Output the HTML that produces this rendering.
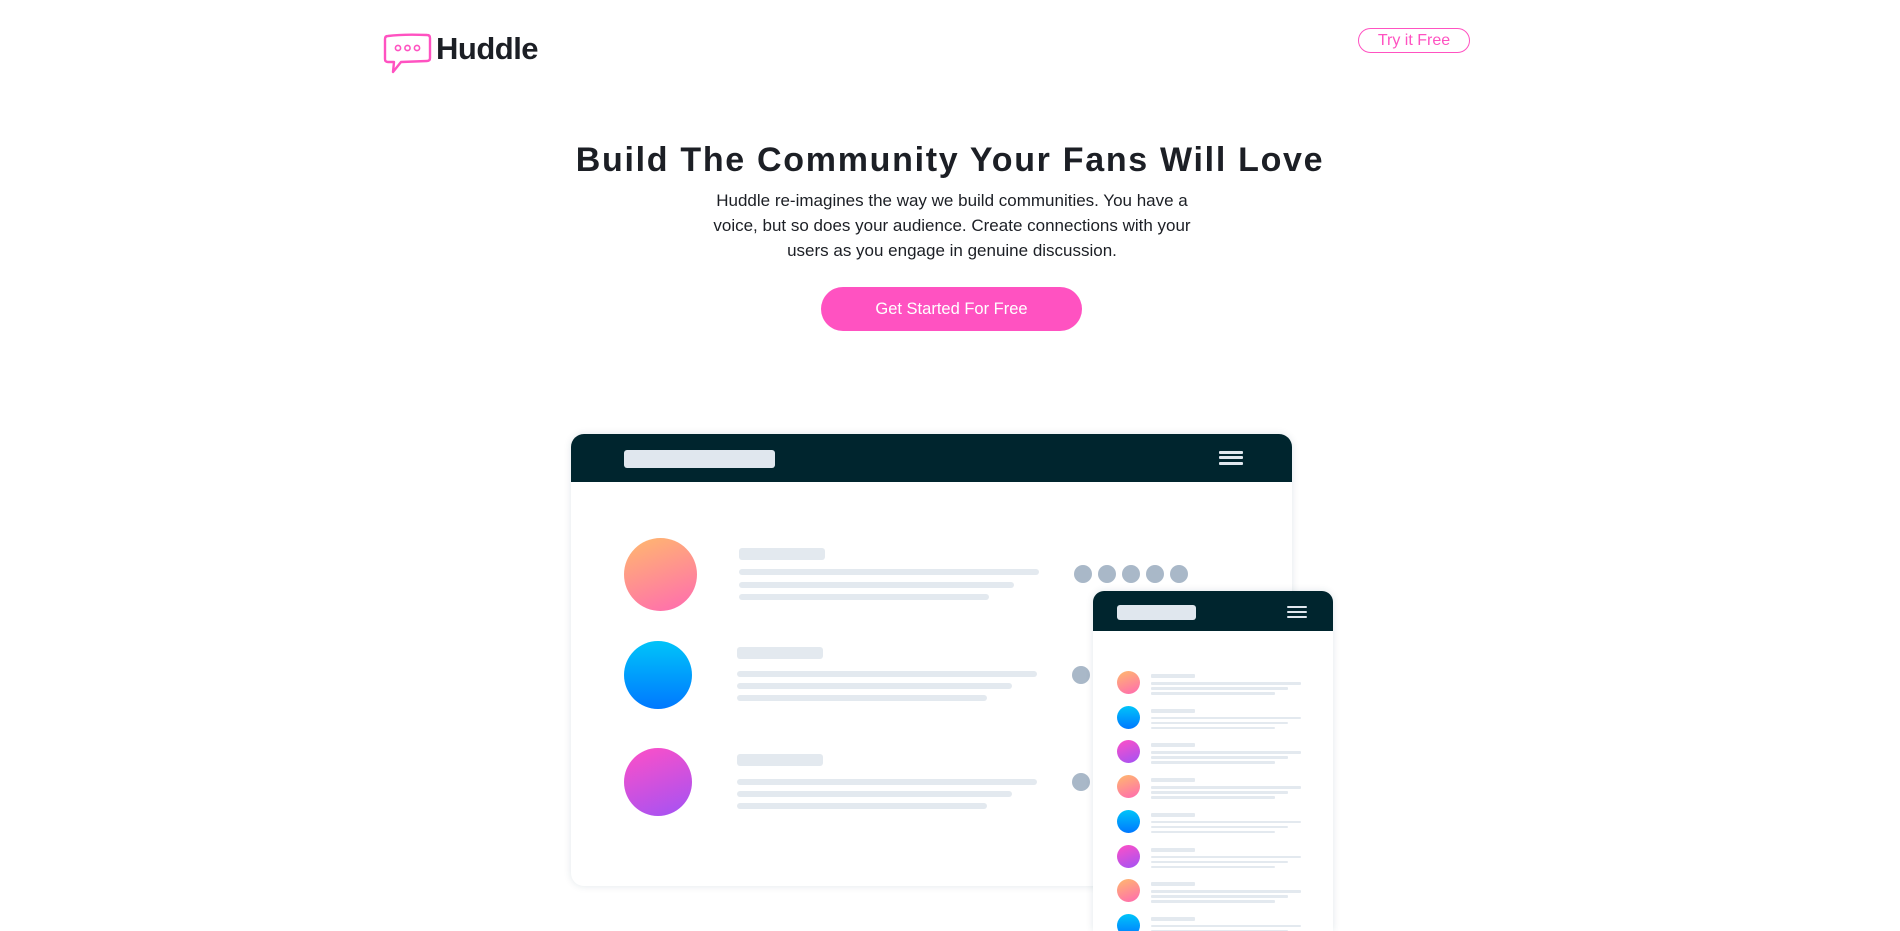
<!DOCTYPE html>
<html><head><meta charset="utf-8"><style>
*{margin:0;padding:0;box-sizing:border-box}
body{width:1900px;height:922px;overflow:hidden;background:#fff;font-family:"Liberation Sans",sans-serif;color:#1a1a1a;position:relative}
.abs{position:absolute}
.logo{left:436px;top:31px;font-size:31px;font-weight:bold;color:#1c1f25;letter-spacing:-0.5px}
.try{left:1358px;top:28px;width:112px;height:25px;border:1px solid #ff52c1;border-radius:13px;color:#ff52c1;font-size:16px;text-align:center;line-height:23px}
h1{position:absolute;left:0;width:1900px;top:141px;text-align:center;font-size:34px;letter-spacing:1.7px;color:#1c1f25;font-weight:bold}
p.d{position:absolute;left:700px;width:504px;top:188px;text-align:center;font-size:17px;line-height:25px;color:#1c1f25}
.btn{left:821px;top:287px;width:261px;height:44px;border-radius:22px;background:#ff52c1;color:#fff;font-size:16.5px;text-align:center;line-height:44px}
.big{left:571px;top:434px;width:721px;height:452px;border-radius:13px;background:#fff;box-shadow:0 0 8px rgba(0,60,80,.12);overflow:hidden}
.hdr{background:#00252e}
.bar{background:#e0e7ee;border-radius:3px}
.g{background:#e3e9ef;border-radius:3px}
.dot{width:18px;height:18px;border-radius:50%;background:#a9b8c8}
.c1{background:linear-gradient(160deg,#ffb96d,#ff6ab1)}
.c2{background:linear-gradient(180deg,#00c4f9,#0078ff)}
.c3{background:linear-gradient(160deg,#ff50c6,#a252f5)}
.circ{border-radius:50%}
.ham{height:3px;background:#e0e7ee;border-radius:1px}
.phone{left:1093px;top:591px;width:240px;height:340px;border-radius:11px 11px 0 0;background:#fff;box-shadow:0 0 8px rgba(0,60,80,.12);overflow:hidden}
</style></head><body>
<svg class="abs" style="left:383px;top:32px" width="50" height="42" viewBox="0 0 50 42">
<path d="M5 4 Q20 2 44 3 Q47 3 47 6 L47 26 Q47 29 44 29 L18 30 L10 40 L11 30 L5 30 Q2 30 2 27 L2 7 Q2 4 5 4Z" fill="none" stroke="#ff52c1" stroke-width="2.4" stroke-linejoin="round"/>
<circle cx="15" cy="16" r="2.6" fill="none" stroke="#ff52c1" stroke-width="1.6"/>
<circle cx="24.5" cy="16" r="2.6" fill="none" stroke="#ff52c1" stroke-width="1.6"/>
<circle cx="34" cy="16" r="2.6" fill="none" stroke="#ff52c1" stroke-width="1.6"/>
</svg>
<div class="abs logo">Huddle</div>
<div class="abs try">Try it Free</div>
<h1>Build The Community Your Fans Will Love</h1>
<p class="d">Huddle re-imagines the way we build communities. You have a<br>voice, but so does your audience. Create connections with your<br>users as you engage in genuine discussion.</p>
<div class="abs btn">Get Started For Free</div>

<div class="abs big">
 <div class="abs hdr" style="left:0;top:0;width:721px;height:48px"></div>
 <div class="abs bar" style="left:53px;top:16px;width:151px;height:18px"></div>
 <div class="abs ham" style="left:648px;top:17px;width:24px"></div>
 <div class="abs ham" style="left:648px;top:22px;width:24px"></div>
 <div class="abs ham" style="left:648px;top:28px;width:24px"></div>

 <div class="abs circ c1" style="left:53px;top:104px;width:73px;height:73px"></div>
 <div class="abs g" style="left:168px;top:114px;width:86px;height:12px"></div>
 <div class="abs g" style="left:168px;top:135px;width:300px;height:6px"></div>
 <div class="abs g" style="left:168px;top:148px;width:275px;height:6px"></div>
 <div class="abs g" style="left:168px;top:160px;width:250px;height:6px"></div>
 <div class="abs dot" style="left:503px;top:131px"></div>
 <div class="abs dot" style="left:527px;top:131px"></div>
 <div class="abs dot" style="left:551px;top:131px"></div>
 <div class="abs dot" style="left:575px;top:131px"></div>
 <div class="abs dot" style="left:599px;top:131px"></div>

 <div class="abs circ c2" style="left:53px;top:207px;width:68px;height:68px"></div>
 <div class="abs g" style="left:166px;top:213px;width:86px;height:12px"></div>
 <div class="abs g" style="left:166px;top:237px;width:300px;height:6px"></div>
 <div class="abs g" style="left:166px;top:249px;width:275px;height:6px"></div>
 <div class="abs g" style="left:166px;top:261px;width:250px;height:6px"></div>
 <div class="abs dot" style="left:501px;top:232px"></div>

 <div class="abs circ c3" style="left:53px;top:314px;width:68px;height:68px"></div>
 <div class="abs g" style="left:166px;top:320px;width:86px;height:12px"></div>
 <div class="abs g" style="left:166px;top:345px;width:300px;height:6px"></div>
 <div class="abs g" style="left:166px;top:357px;width:275px;height:6px"></div>
 <div class="abs g" style="left:166px;top:369px;width:250px;height:6px"></div>
 <div class="abs dot" style="left:501px;top:339px"></div>
</div>

<div class="abs phone">
 <div class="abs hdr" style="left:0;top:0;width:240px;height:40px"></div>
 <div class="abs bar" style="left:24px;top:14px;width:79px;height:15px"></div>
 <div class="abs ham" style="left:194px;top:15px;width:20px;height:2px"></div>
 <div class="abs ham" style="left:194px;top:20px;width:20px;height:2px"></div>
 <div class="abs ham" style="left:194px;top:25px;width:20px;height:2px"></div>
 <div id="rows"></div>
</div>
<script>
var r=document.getElementById('rows'),cls=['c1','c2','c3'],h='';
for(var i=0;i<8;i++){var y=80+i*34.7;
h+='<div class="abs circ '+cls[i%3]+'" style="left:24px;top:'+(y)+'px;width:23px;height:23px"></div>'+
'<div class="abs g" style="left:58px;top:'+(y+3)+'px;width:44px;height:4px;border-radius:1px"></div>'+
'<div class="abs g" style="left:58px;top:'+(y+11)+'px;width:150px;height:2.5px;border-radius:1px"></div>'+
'<div class="abs g" style="left:58px;top:'+(y+16)+'px;width:137px;height:2.5px;border-radius:1px"></div>'+
'<div class="abs g" style="left:58px;top:'+(y+21)+'px;width:124px;height:2.5px;border-radius:1px"></div>';}
r.innerHTML=h;
</script>
</body></html>
